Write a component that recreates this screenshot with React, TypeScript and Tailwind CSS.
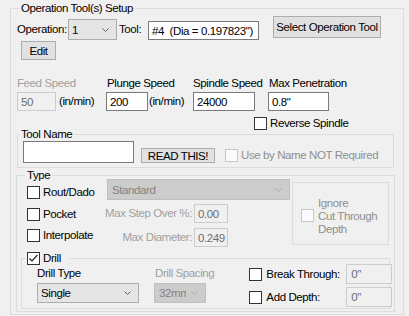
import React from "react";

const Chevron = ({ color = "#606060" }: { color?: string }) => (
  <svg width="7" height="4" viewBox="0 0 7 4" className="shrink-0">
    <polyline points="0.5,0.5 3.5,3.5 6.5,0.5" fill="none" stroke={color} strokeWidth="1" />
  </svg>
);

const Chk = ({ checked = false, disabled = false }: { checked?: boolean; disabled?: boolean }) => (
  <div
    className={
      "w-[13px] h-[13px] shrink-0 border flex items-center justify-center " +
      (disabled ? "border-[#c8c8c8] bg-[#fbfbfb]" : "border-[#333333] bg-white")
    }
  >
    {checked && (
      <svg width="11" height="11" viewBox="0 0 11 11">
        <polyline points="1.5,5.5 4,8 9.5,2" fill="none" stroke="#222" strokeWidth="1.2" />
      </svg>
    )}
  </div>
);

const App = () => {
  return (
    <div className="w-[409px] h-[316px] bg-[#f0f0f0] overflow-hidden font-['Liberation_Sans',Arial,sans-serif] text-[11.5px] leading-[14px] tracking-[-0.4px] text-black">
      {/* Outer group */}
      <div className="relative ml-[10px] mt-[8px] w-[394px] h-[307px] border border-[#dcdcdc]">
        <span className="absolute left-[8px] -top-[8px] px-[2px] bg-[#f0f0f0] whitespace-nowrap">
          Operation Tool(s) Setup
        </span>

        {/* Row 1 */}
        <div className="flex items-start mt-[7px] ml-[6px]">
          <span className="mt-[6px] w-[51px] whitespace-nowrap">Operation:</span>
          <div className="mt-[3px] w-[49px] h-[21px] border border-[#adadad] bg-[#e5e5e5] flex items-center justify-between pl-[3px] pr-[7px]">
            <span>1</span>
            <Chevron />
          </div>
          <span className="mt-[6px] ml-[2px] w-[29px]">Tool:</span>
          <div className="mt-[5px] w-[111px] h-[19px] border border-[#7a7a7a] bg-white flex items-center pl-[3px] whitespace-pre overflow-hidden">
            {'#4  (Dia = 0.197823")'}
          </div>
          <div className="ml-[14px] w-[108px] h-[22px] border border-[#adadad] bg-[#e1e1e1] flex items-center justify-center whitespace-nowrap">
            Select Operation Tool
          </div>
        </div>

        {/* Edit */}
        <div className="mt-[1px] ml-[10px] w-[35px] h-[19px] border border-[#adadad] bg-[#e1e1e1] flex items-center justify-center">
          Edit
        </div>

        {/* Speeds */}
        <div className="flex mt-[16px] ml-[6px]">
          <div className="w-[89px] flex flex-col">
            <span className="text-[#a0a0a0] whitespace-nowrap">Feed Speed</span>
            <div className="flex mt-[2px]">
              <div className="w-[39px] h-[19px] border border-[#cccccc] bg-[#f0f0f0] text-[#6d6d6d] flex items-center pl-[3px]">
                50
              </div>
              <span className="ml-[3px] leading-[19px] whitespace-nowrap">(in/min)</span>
            </div>
          </div>
          <div className="w-[87px] flex flex-col">
            <span className="pl-[1px] whitespace-nowrap">Plunge Speed</span>
            <div className="flex mt-[2px]">
              <div className="w-[42px] h-[19px] border border-[#7a7a7a] bg-white flex items-center pl-[3px]">
                200
              </div>
              <span className="ml-[1px] leading-[19px] whitespace-nowrap">(in/min)</span>
            </div>
          </div>
          <div className="w-[75px] flex flex-col">
            <span className="whitespace-nowrap">Spindle Speed</span>
            <div className="mt-[2px] w-[62px] h-[19px] border border-[#7a7a7a] bg-white flex items-center pl-[3px]">
              24000
            </div>
          </div>
          <div className="flex flex-col">
            <span className="pl-[1px] whitespace-nowrap">Max Penetration</span>
            <div className="mt-[2px] w-[61px] h-[19px] border border-[#7a7a7a] bg-white flex items-center pl-[3px]">
              0.8"
            </div>
          </div>
        </div>

        {/* Reverse spindle */}
        <div className="flex items-center mt-[6px] ml-[243px] h-[13px]">
          <Chk />
          <span className="ml-[3px] leading-[13px] whitespace-nowrap">Reverse Spindle</span>
        </div>

        {/* Tool Name group */}
        <div className="relative mt-[4px] ml-[6px] w-[377px] h-[34px] border border-[#dcdcdc]">
          <span className="absolute left-[1px] -top-[8px] px-[2px] bg-[#f0f0f0] whitespace-nowrap">Tool Name</span>
          <div className="flex items-start">
            <div className="ml-[5px] mt-[6px] w-[111px] h-[22px] border border-[#7a7a7a] bg-white" />
            <div className="ml-[7px] mt-[13px] w-[74px] h-[15px] border border-[#adadad] bg-[#e1e1e1] flex items-center justify-center whitespace-nowrap">
              READ THIS!
            </div>
            <div className="ml-[10px] mt-[14px] flex items-center h-[13px]">
              <Chk disabled />
              <span className="ml-[3px] leading-[13px] text-[#8f8f8f] whitespace-nowrap">Use by Name NOT Required</span>
            </div>
          </div>
        </div>

        {/* Type group */}
        <div className="relative mt-[7px] ml-[5px] w-[379px] h-[137px] border border-[#dcdcdc]">
          <span className="absolute left-[8px] -top-[8px] px-[2px] bg-[#f0f0f0]">Type</span>
          <div className="flex items-start">
            <div className="ml-[10px] flex flex-col">
              {/* Rout */}
              <div className="flex mt-[3px]">
                <div className="w-[80px]">
                  <div className="flex items-center h-[13px] mt-[7px]">
                    <Chk />
                    <span className="ml-[3px] leading-[13px] whitespace-nowrap">Rout/Dado</span>
                  </div>
                </div>
                <div className="w-[183px] h-[21px] border border-[#bfbfbf] bg-[#cccccc] text-[#838383] flex items-center justify-between pl-[4px] pr-[7px]">
                  <span>Standard</span>
                  <Chevron color="#a8a8a8" />
                </div>
              </div>
              {/* Pocket */}
              <div className="flex mt-[4px]">
                <div className="w-[167px] flex items-start justify-between">
                  <div className="flex items-center h-[13px] mt-[4px]">
                    <Chk />
                    <span className="ml-[3px] leading-[13px] whitespace-nowrap">Pocket</span>
                  </div>
                  <span className="leading-[19px] pr-[2px] text-[#a0a0a0] whitespace-nowrap">Max Step Over %:</span>
                </div>
                <div className="w-[34px] h-[19px] border border-[#cccccc] bg-[#f0f0f0] text-[#6d6d6d] flex items-center pl-[3px]">
                  0.00
                </div>
              </div>
              {/* Interpolate */}
              <div className="flex mt-[5px]">
                <div className="w-[167px] flex items-start justify-between">
                  <div className="flex items-center h-[13px] mt-[1px]">
                    <Chk />
                    <span className="ml-[3px] leading-[13px] whitespace-nowrap">Interpolate</span>
                  </div>
                  <span className="leading-[19px] pr-[2px] text-[#a0a0a0] whitespace-nowrap">Max Diameter:</span>
                </div>
                <div className="w-[34px] h-[19px] border border-[#cccccc] bg-[#f0f0f0] text-[#6d6d6d] flex items-center pl-[3px]">
                  0.249
                </div>
              </div>
            </div>
            {/* Ignore group */}
            <div className="ml-[2px] mt-[6px] w-[97px] h-[63px] border border-[#dcdcdc] flex items-start">
              <div className="ml-[8px] mt-[26px]">
                <Chk disabled />
              </div>
              <div className="ml-[4px] mt-[14px] leading-[13px] text-[#8f8f8f] whitespace-nowrap">
                Ignore
                <br />
                Cut Through
                <br />
                Depth
              </div>
            </div>
          </div>

          {/* Drill group */}
          <div className="relative mt-[11px] ml-[4px] w-[369px] h-[51px] border border-[#dcdcdc]">
            <div className="absolute left-[3px] -top-[8px] h-[14px] pl-[2px] pr-[9px] bg-[#f0f0f0] flex items-center">
              <Chk checked />
              <span className="ml-[3px]">Drill</span>
            </div>
            <div className="flex items-start">
              <div className="ml-[15px] flex flex-col">
                <div className="flex mt-[7px]">
                  <span className="w-[118px] whitespace-nowrap">Drill Type</span>
                  <span className="text-[#a0a0a0] whitespace-nowrap">Drill Spacing</span>
                </div>
                <div className="flex mt-[3px]">
                  <div className="w-[102px] h-[20px] border border-[#adadad] bg-[#e5e5e5] flex items-center justify-between pl-[3px] pr-[7px]">
                    <span>Single</span>
                    <Chevron />
                  </div>
                  <div className="ml-[15px] w-[52px] h-[20px] border border-[#bfbfbf] bg-[#cccccc] text-[#838383] flex items-center justify-between pl-[4px] pr-[7px]">
                    <span className="w-[27px] overflow-hidden whitespace-nowrap">32mm</span>
                    <Chevron color="#a8a8a8" />
                  </div>
                </div>
              </div>
              <div className="ml-[35px] flex flex-col">
                <div className="flex mt-[5px]">
                  <div className="w-[97px] h-[20px] flex items-center">
                    <Chk />
                    <span className="ml-[4px] whitespace-nowrap">Break Through:</span>
                  </div>
                  <div className="w-[46px] h-[20px] border border-[#cccccc] bg-[#f0f0f0] text-[#6d6d6d] flex items-center pl-[4px]">
                    0"
                  </div>
                </div>
                <div className="flex mt-[3px]">
                  <div className="w-[97px] h-[20px] flex items-center">
                    <Chk />
                    <span className="ml-[4px] whitespace-nowrap">Add Depth:</span>
                  </div>
                  <div className="w-[46px] h-[20px] border border-[#cccccc] bg-[#f0f0f0] text-[#6d6d6d] flex items-center pl-[4px]">
                    0"
                  </div>
                </div>
              </div>
            </div>
          </div>
        </div>
      </div>
    </div>
  );
};

export default App;
